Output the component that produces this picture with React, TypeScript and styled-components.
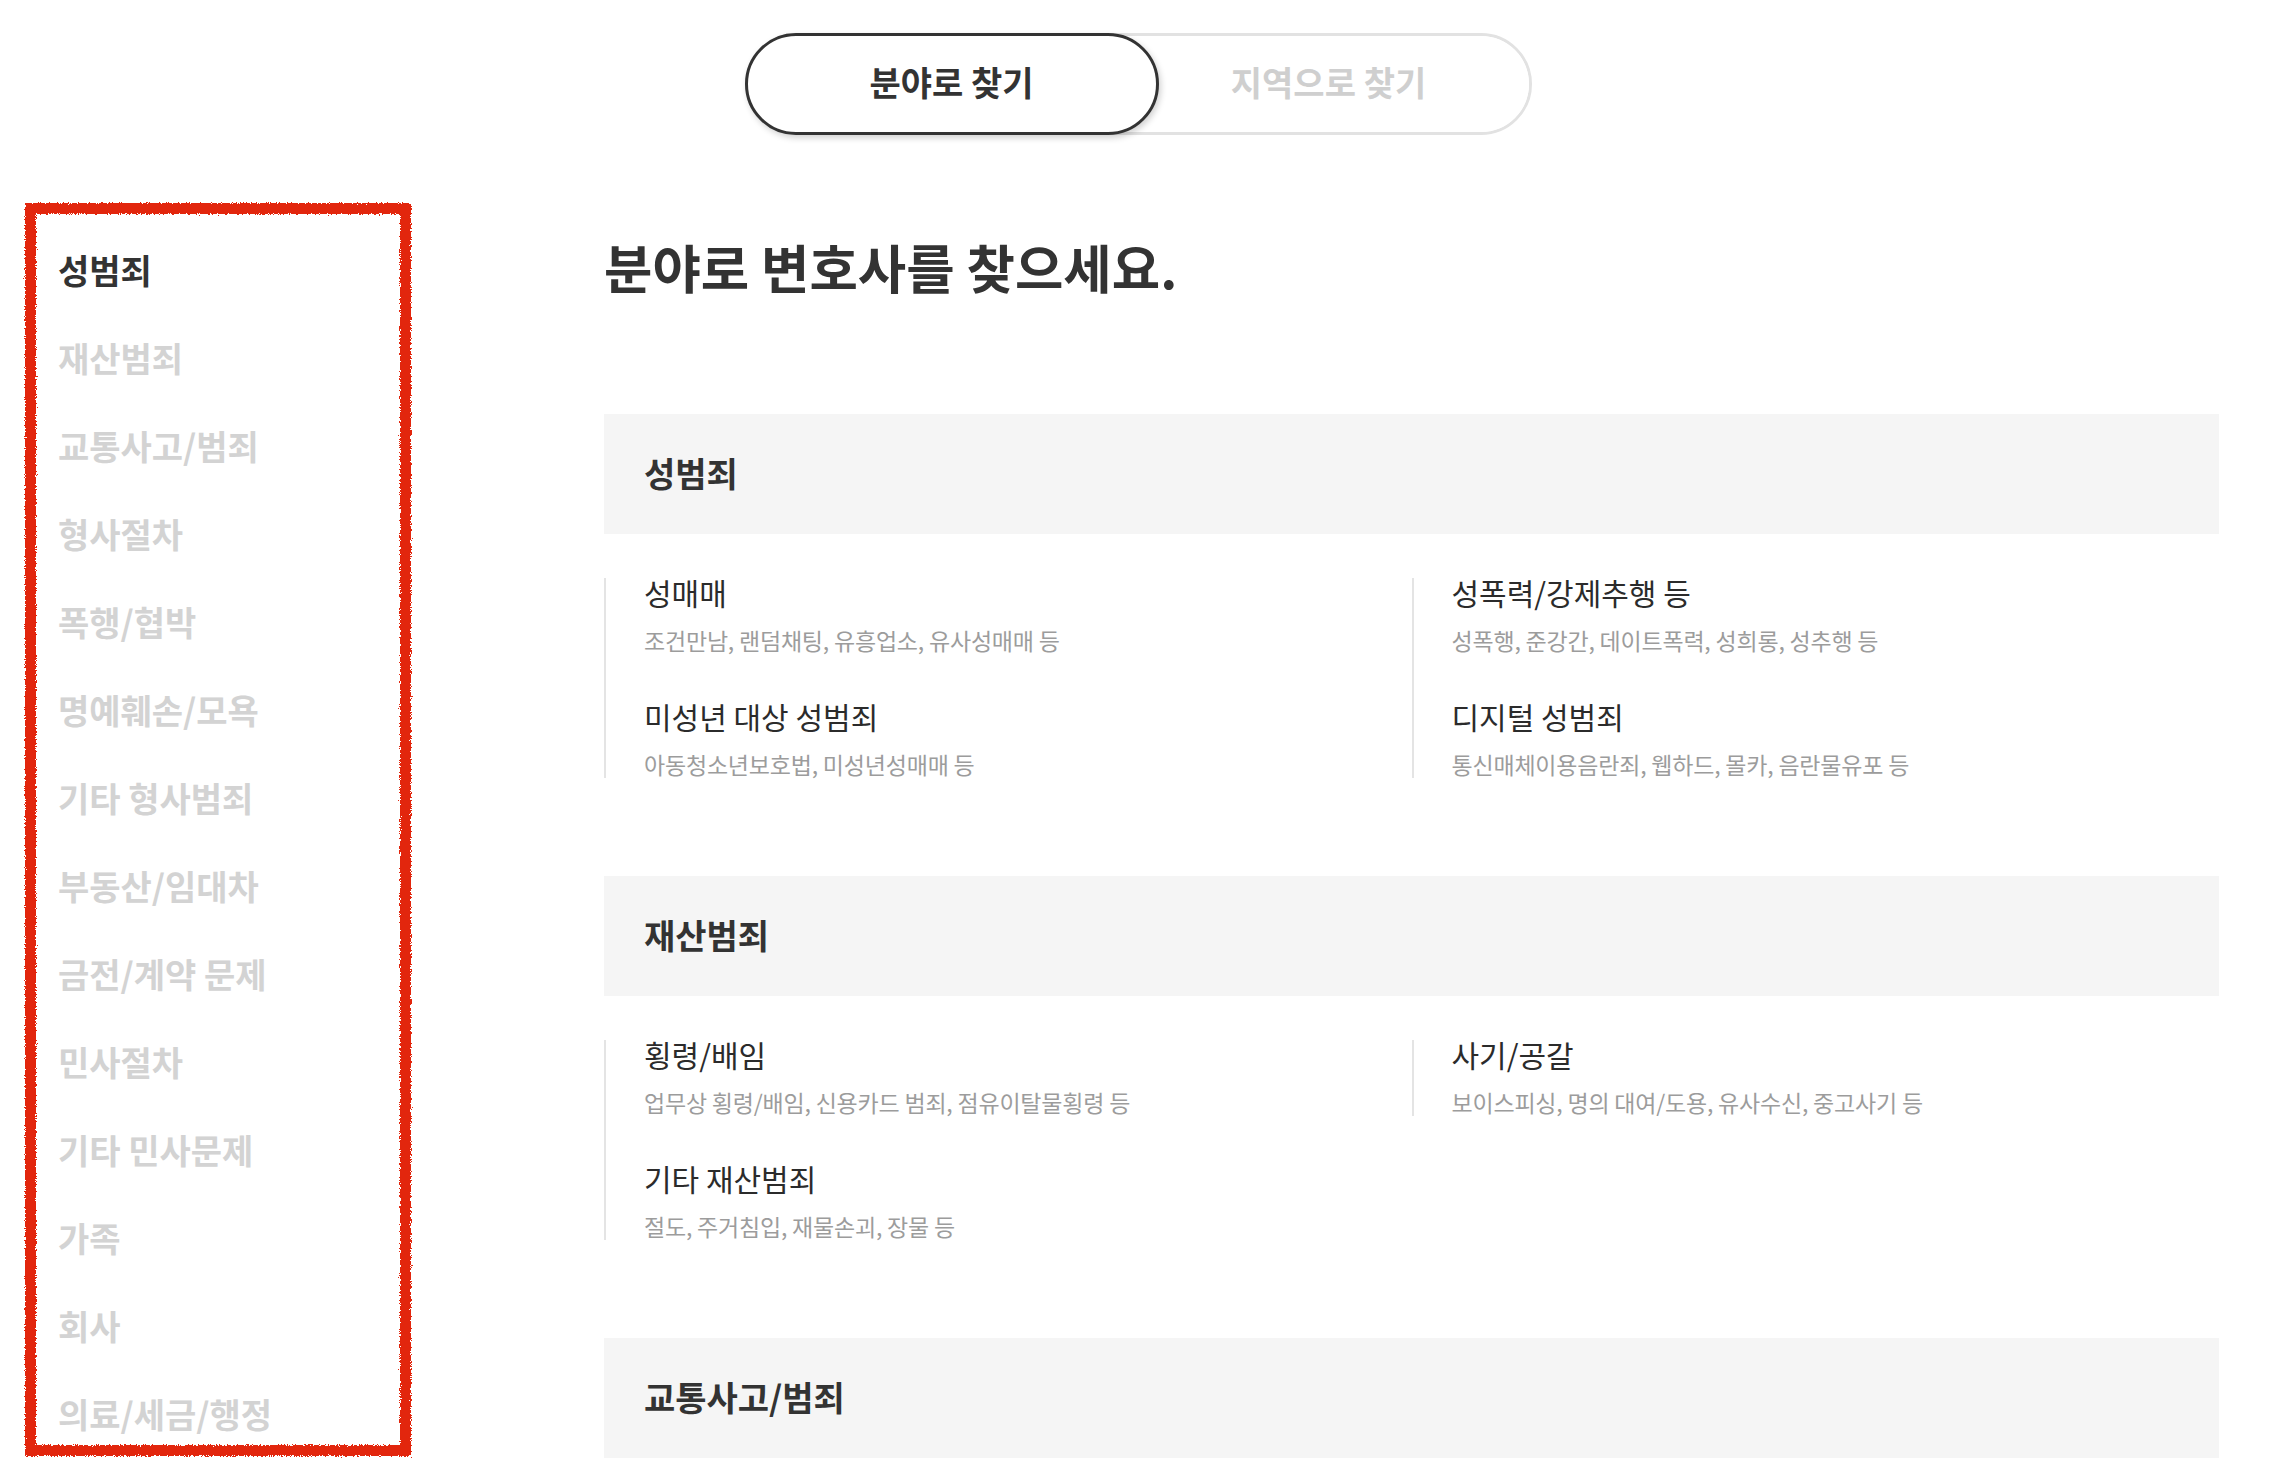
import React, { useState } from "react";
import styled, { createGlobalStyle } from "styled-components";

const GlobalStyle = createGlobalStyle`
  * { box-sizing: border-box; }
  html, body { margin: 0; padding: 0; background: #ffffff; }
  body {
    font-family: "Noto Sans CJK KR", "Noto Sans", sans-serif;
    color: #333333;
  }
`;

const Page = styled.div`
  width: 2276px;
  min-height: 1476px;
  padding-top: 33px;
`;

const Toggle = styled.div`
  display: flex;
  align-items: stretch;
  width: 787px;
  height: 102px;
  margin: 0 auto;
  border: 3px solid #e2e2e2;
  border-radius: 999px;
  background: #ffffff;
`;

const ToggleButton = styled.button<{ $active?: boolean }>`
  display: flex;
  align-items: center;
  justify-content: center;
  padding-bottom: 7px;
  font-family: inherit;
  font-size: 34px;
  font-weight: 700;
  cursor: pointer;
  background: #ffffff;
  ${(p) =>
    p.$active
      ? `
    width: 414px;
    margin: -3px 0 -3px -3px;
    border: 3px solid #333333;
    border-radius: 999px;
    color: #333333;
    box-shadow: 2px 3px 6px rgba(0, 0, 0, 0.18);
    position: relative;
    z-index: 1;
  `
      : `
    flex: 1;
    border: none;
    border-radius: 0 999px 999px 0;
    color: #cfcfcf;
    padding-right: 36px;
  `}
`;

const Main = styled.div`
  display: flex;
  align-items: flex-start;
  margin-top: 68px;
  padding-left: 25px;
`;

const Sidebar = styled.nav`
  position: relative;
  width: 386px;
  height: 1253px;
  padding: 47px 0 0 33px;
  display: flex;
  flex-direction: column;
  gap: 48px;
  &::after {
    content: "";
    position: absolute;
    inset: 0;
    border: 11px solid #e2260b;
    filter: url(#chalk);
    pointer-events: none;
  }
`;

const SideItem = styled.a<{ $active?: boolean }>`
  display: block;
  height: 40px;
  line-height: 40px;
  font-size: 34px;
  font-weight: 700;
  white-space: nowrap;
  color: ${(p) => (p.$active ? "#333333" : "#d3d3d3")};
  text-decoration: none;
  cursor: pointer;
`;

const Content = styled.div`
  width: 1615px;
  margin-left: 193px;
  padding-top: 34px;
`;

const Heading = styled.h1`
  margin: 0 0 119px;
  font-size: 52.6px;
  line-height: 58px;
  font-weight: 700;
  color: #333333;
`;

const Section = styled.section`
  margin-bottom: 98px;
`;

const SectionHeader = styled.h2`
  margin: 0 0 44px;
  height: 120px;
  display: flex;
  align-items: center;
  padding: 0 0 4px 40px;
  background: #f5f5f5;
  font-size: 34px;
  font-weight: 700;
  color: #333333;
`;

const Grid = styled.div`
  display: grid;
  grid-template-columns: 1fr 1fr;
  align-items: start;
`;

const Column = styled.ul`
  list-style: none;
  margin: 0;
  padding: 0 0 0 38px;
  border-left: 2px solid #e4e4e4;
  display: flex;
  flex-direction: column;
  gap: 48px;
`;

const Item = styled.li`
  display: flex;
  flex-direction: column;
  gap: 20px;
  cursor: pointer;
`;

const ItemTitle = styled.span`
  font-size: 30px;
  line-height: 28px;
  font-weight: 400;
  color: #2b2b2b;
`;

const ItemDesc = styled.span`
  font-size: 23px;
  line-height: 28px;
  font-weight: 400;
  letter-spacing: -0.2px;
  color: #9c9c9c;
`;

const HiddenSvg = styled.svg`
  position: absolute;
  width: 0;
  height: 0;
`;

type Entry = { title: string; desc: string };
type Category = { name: string; columns: Entry[][] };

const sideMenu = [
  "성범죄",
  "재산범죄",
  "교통사고/범죄",
  "형사절차",
  "폭행/협박",
  "명예훼손/모욕",
  "기타 형사범죄",
  "부동산/임대차",
  "금전/계약 문제",
  "민사절차",
  "기타 민사문제",
  "가족",
  "회사",
  "의료/세금/행정",
];

const categories: Category[] = [
  {
    name: "성범죄",
    columns: [
      [
        { title: "성매매", desc: "조건만남, 랜덤채팅, 유흥업소, 유사성매매 등" },
        { title: "미성년 대상 성범죄", desc: "아동청소년보호법, 미성년성매매 등" },
      ],
      [
        { title: "성폭력/강제추행 등", desc: "성폭행, 준강간, 데이트폭력, 성희롱, 성추행 등" },
        { title: "디지털 성범죄", desc: "통신매체이용음란죄, 웹하드, 몰카, 음란물유포 등" },
      ],
    ],
  },
  {
    name: "재산범죄",
    columns: [
      [
        { title: "횡령/배임", desc: "업무상 횡령/배임, 신용카드 범죄, 점유이탈물횡령 등" },
        { title: "기타 재산범죄", desc: "절도, 주거침입, 재물손괴, 장물 등" },
      ],
      [{ title: "사기/공갈", desc: "보이스피싱, 명의 대여/도용, 유사수신, 중고사기 등" }],
    ],
  },
  {
    name: "교통사고/범죄",
    columns: [
      [
        { title: "교통사고/도주", desc: "뺑소니, 사고처리, 보험처리 등" },
        { title: "음주/무면허", desc: "음주운전, 무면허운전, 측정거부 등" },
      ],
      [{ title: "기타 교통범죄", desc: "보복운전, 난폭운전, 신호위반 등" }],
    ],
  },
];

export default function App() {
  const [mode, setMode] = useState<"field" | "region">("field");
  const [active, setActive] = useState(0);

  return (
    <>
      <GlobalStyle />
      <HiddenSvg aria-hidden="true">
        <filter id="chalk" x="-5%" y="-5%" width="110%" height="110%">
          <feTurbulence type="fractalNoise" baseFrequency="0.9" numOctaves="2" seed="3" result="noise" />
          <feDisplacementMap in="SourceGraphic" in2="noise" scale="5" xChannelSelector="R" yChannelSelector="G" />
        </filter>
      </HiddenSvg>
      <Page>
        <Toggle>
          <ToggleButton $active={mode === "field"} onClick={() => setMode("field")}>
            분야로 찾기
          </ToggleButton>
          <ToggleButton $active={mode === "region"} onClick={() => setMode("region")}>
            지역으로 찾기
          </ToggleButton>
        </Toggle>
        <Main>
          <Sidebar>
            {sideMenu.map((m, i) => (
              <SideItem key={m} $active={i === active} onClick={() => setActive(i)}>
                {m}
              </SideItem>
            ))}
          </Sidebar>
          <Content>
            <Heading>분야로 변호사를 찾으세요.</Heading>
            {categories.map((c) => (
              <Section key={c.name}>
                <SectionHeader>{c.name}</SectionHeader>
                <Grid>
                  {c.columns.map((col, ci) => (
                    <Column key={ci}>
                      {col.map((e) => (
                        <Item key={e.title}>
                          <ItemTitle>{e.title}</ItemTitle>
                          <ItemDesc>{e.desc}</ItemDesc>
                        </Item>
                      ))}
                    </Column>
                  ))}
                </Grid>
              </Section>
            ))}
          </Content>
        </Main>
      </Page>
    </>
  );
}
